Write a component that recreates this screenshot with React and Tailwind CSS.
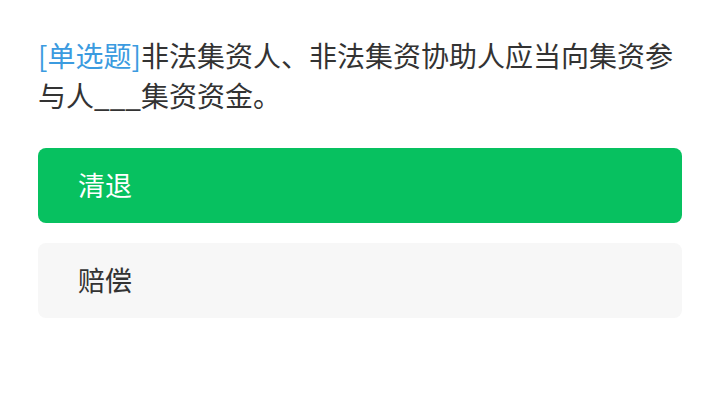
import React from 'react';

const options = [
  { label: '清退', selected: true },
  { label: '赔偿', selected: false },
];

export default function App() {
  return (
    <div
      className="w-[720px] h-[416px] bg-white px-[38px] pt-[35px]"
      style={{ fontFamily: '"Noto Sans CJK SC", "Noto Sans", sans-serif' }}
    >
      <p className="text-[28px] leading-[40px] text-[#333333]">
        <span className="text-[#3b9be0]">[单选题]</span>
        非法集资人、非法集资协助人应当向集资参与人___集资资金。
      </p>

      <div className="mt-[33px] flex flex-col gap-[20px]">
        {options.map((o) => (
          <div
            key={o.label}
            className={
              o.selected
                ? 'h-[75px] rounded-[8px] bg-[#07c160] text-white flex items-center pl-[40px] text-[27px]'
                : 'h-[75px] rounded-[8px] bg-[#f7f7f7] text-[#333333] flex items-center pl-[40px] text-[27px]'
            }
          >
            {o.label}
          </div>
        ))}
      </div>
    </div>
  );
}
